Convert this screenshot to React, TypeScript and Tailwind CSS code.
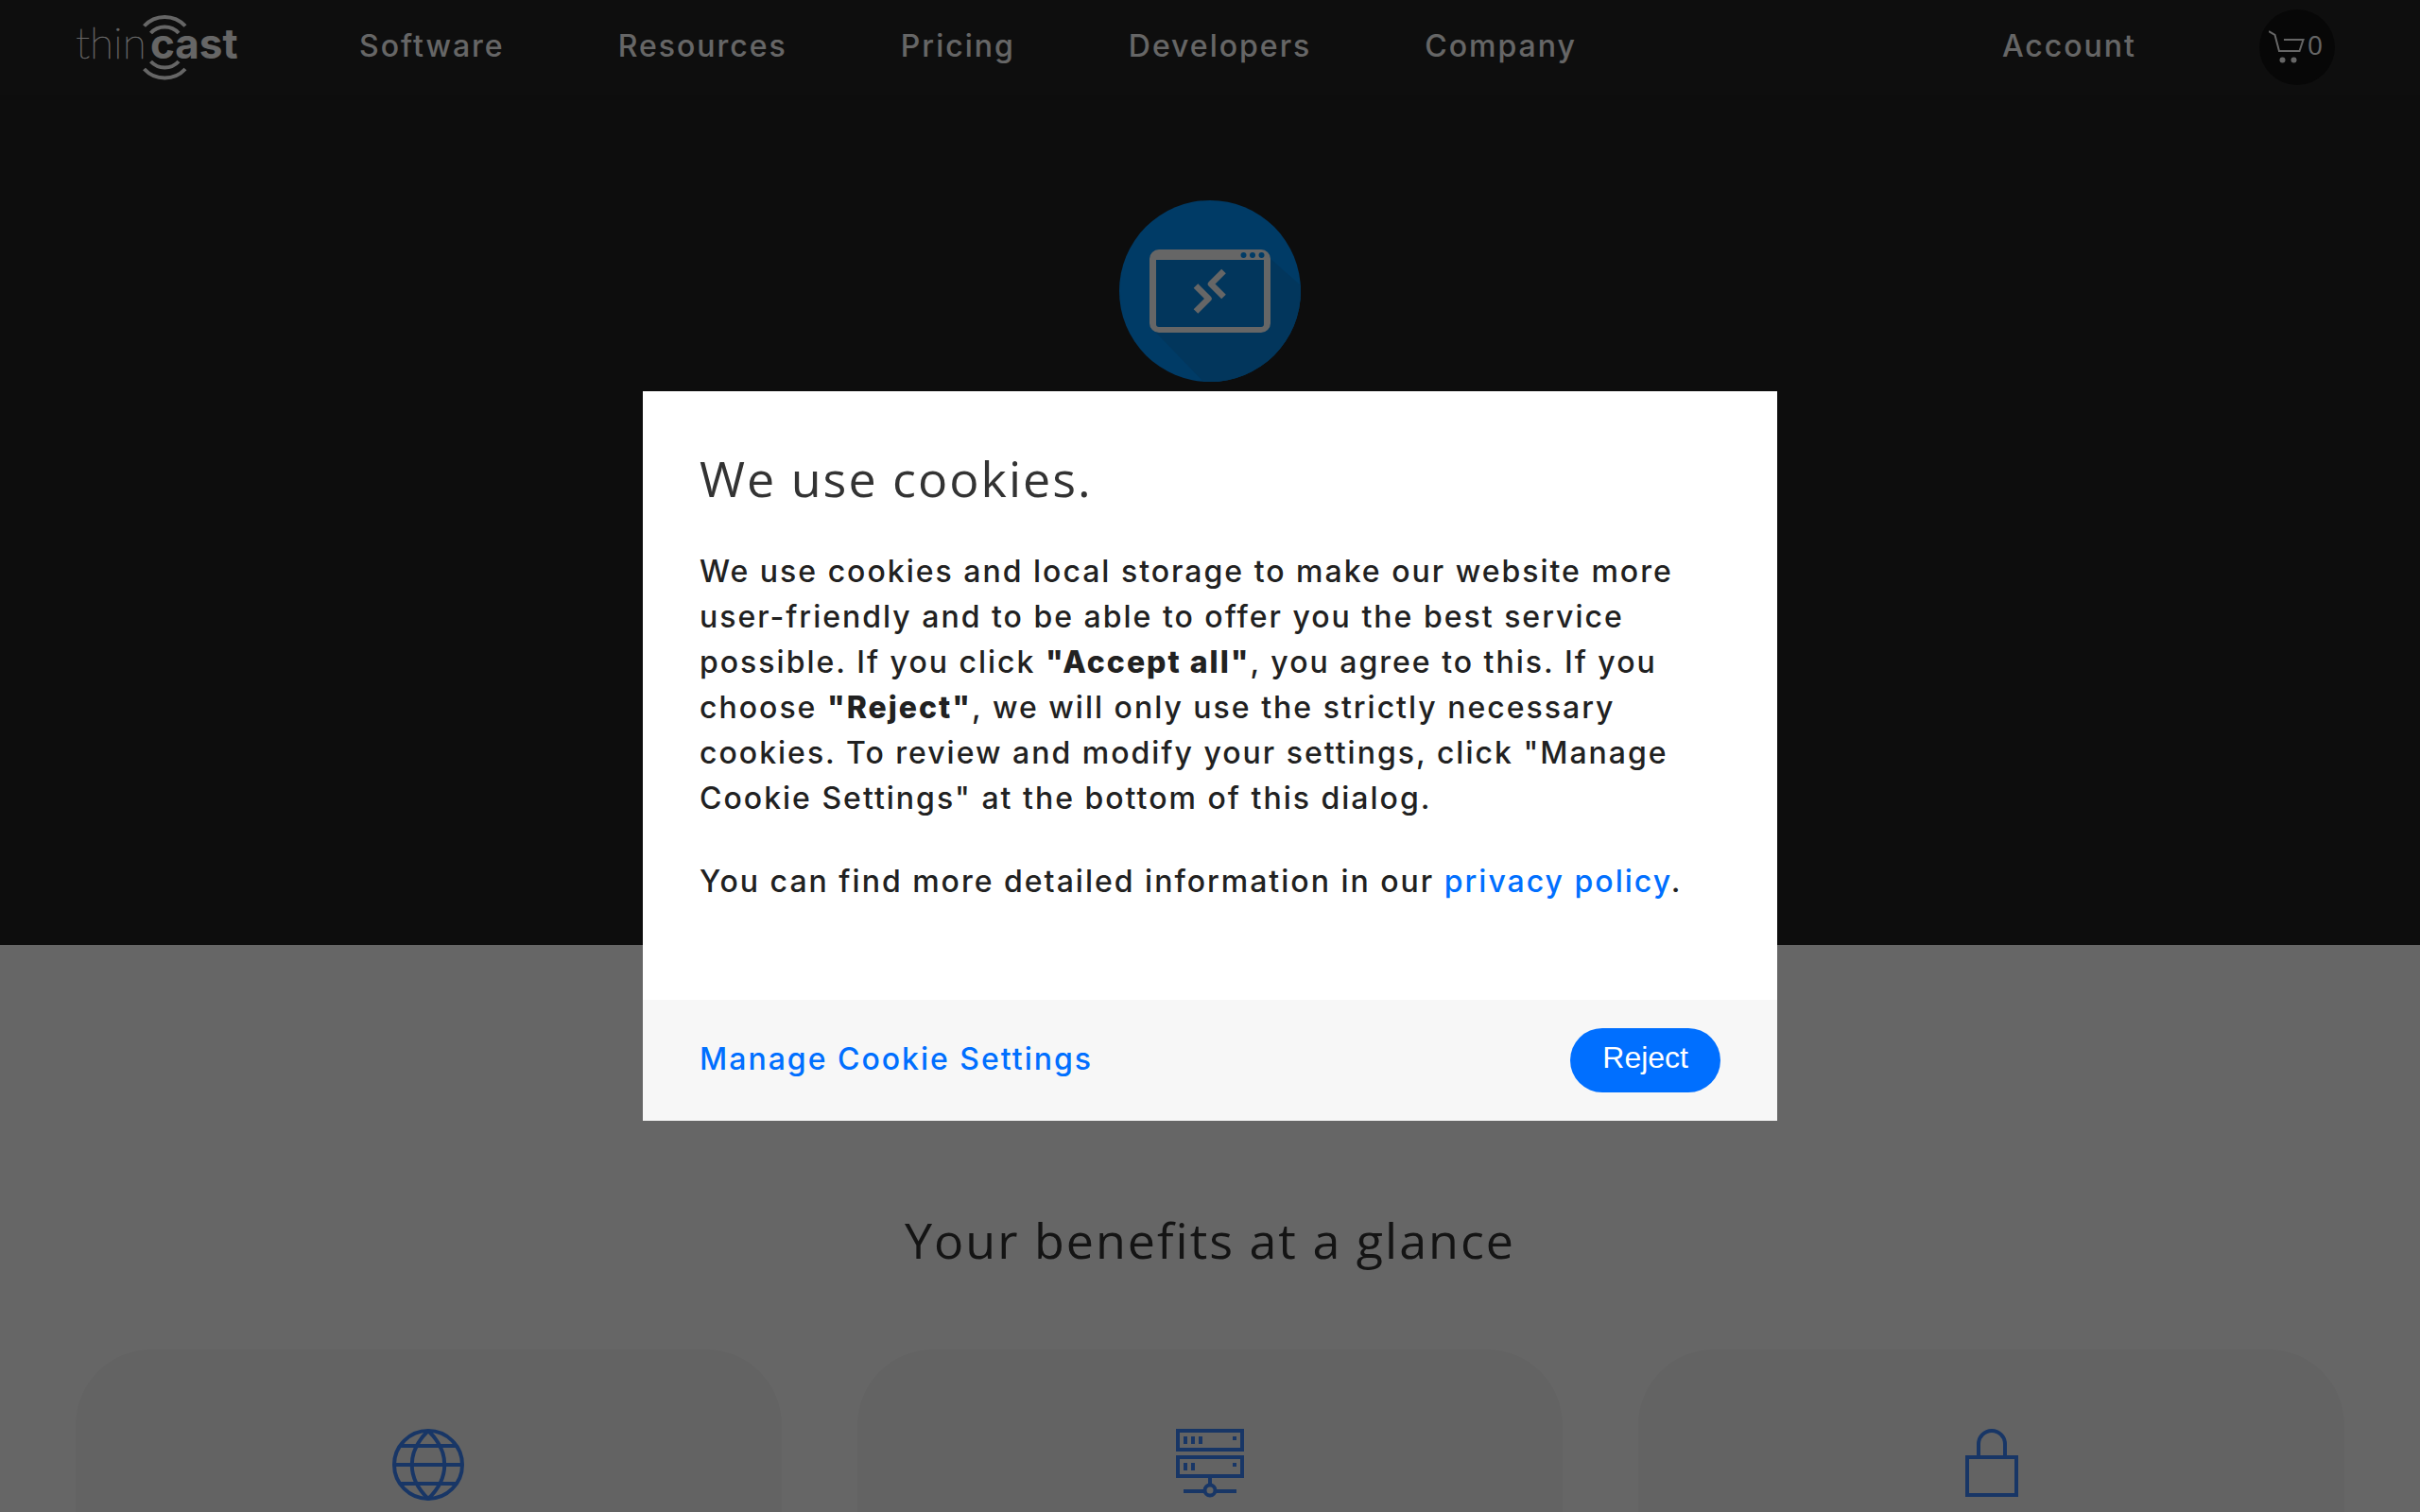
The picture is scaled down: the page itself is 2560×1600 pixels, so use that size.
import type { ReactNode } from "react";

const navLinks = ["Software", "Resources", "Pricing", "Developers", "Company"];

function Logo() {
  return (
    <svg className="w-[176px] h-[74px]" viewBox="80 14 176 74" fill="none" role="img" aria-label="thincast">
      <text
        x="80"
        y="63"
        fill="#fff"
        fontFamily="Lato, Inter, sans-serif"
        fontWeight="100"
        fontSize="46"
        stroke="#fff"
        strokeWidth="0.5"
        letterSpacing="0"
      >
        thin
      </text>
      <text
        x="159"
        y="63"
        fill="#fff"
        fontFamily="Inter, sans-serif"
        fontWeight="700"
        fontSize="44"
        letterSpacing="0"
      >
        cast
      </text>
      <g stroke="#fff" strokeWidth="4">
        <path d="M152.500 28.500A29.500 29.500 0 0 1 196 28.500" />
        <path d="M159.500 36A20 20 0 0 1 189 36" />
        <path d="M159.500 66A20 20 0 0 0 189 66" />
        <path d="M152.500 74A29.500 29.500 0 0 0 196 74" />
      </g>
    </svg>
  );
}

function CartIcon() {
  return (
    <svg className="w-[38px] h-[36px]" viewBox="0 0 38 36" fill="none" stroke="#fff" strokeWidth="2">
      <path d="M0 1L6.500 5L11 22H32.500L36.500 10H16" />
      <circle cx="14.500" cy="31.500" r="3" fill="#fff" stroke="none" />
      <circle cx="26.500" cy="31.500" r="3" fill="#fff" stroke="none" />
    </svg>
  );
}

function ClientIcon() {
  return (
    <svg className="w-48 h-48" viewBox="0 0 192 192" fill="none">
      <clipPath id="disc">
        <circle cx="96" cy="96" r="96" />
      </clipPath>
      <circle cx="96" cy="96" r="96" fill="#0093ff" />
      <path d="M36 137V60H158L200 97V192H89Z" fill="#0588e6" clipPath="url(#disc)" />
      <path
        fillRule="evenodd"
        fill="#fff"
        d="M42 52H150A10 10 0 0 1 160 62V130A10 10 0 0 1 150 140H42A10 10 0 0 1 32 130V62A10 10 0 0 1 42 52ZM39 63V131A3 3 0 0 0 42 134H150A3 3 0 0 0 153 131V63Z"
      />
      <circle cx="131.500" cy="58" r="3" fill="#0093ff" />
      <circle cx="141" cy="58" r="3" fill="#0093ff" />
      <circle cx="150.500" cy="58" r="3" fill="#0093ff" />
      <g stroke="#fff" strokeWidth="6.500" strokeLinejoin="round">
        <path d="M81 90.500L94.500 104L81 117.500" />
        <path d="M110.500 75L97 88.500L110.500 102" />
      </g>
    </svg>
  );
}

function GlobeIcon() {
  return (
    <svg className="w-20 h-20" viewBox="0 0 80 80" fill="none" stroke="#3c87ff" strokeWidth="4">
      <circle cx="40" cy="38" r="36" />
      <path d="M40 2C17 24 17 52 40 74M40 2C63 24 63 52 40 74M4 38H76M10 18H70M10 58H70" />
    </svg>
  );
}

function ServerIcon() {
  return (
    <svg className="w-20 h-20" viewBox="0 0 80 80" fill="none" stroke="#3c87ff" strokeWidth="4">
      <path d="M6 2H74V22H6ZM6 30H74V50H6ZM40 50V58M12 66H34M46 66H68" />
      <path d="M14 8V16M22 8V16M30 8V16M14 36V44M22 36V44M66 8V12M66 36V40" />
      <circle cx="40" cy="65" r="5.500" />
    </svg>
  );
}

function LockIcon() {
  return (
    <svg className="w-20 h-20" viewBox="0 0 80 80" fill="none" stroke="#3c87ff" strokeWidth="4">
      <path d="M14 30H66V70H14ZM26 30V16A14 14 0 0 1 54 16V30" />
    </svg>
  );
}

function BenefitCard({ children }: { children: ReactNode }) {
  return (
    <div className="h-[480px] rounded-[80px] bg-[#f7f7f7] pt-[84px] flex justify-center items-start">
      {children}
    </div>
  );
}

export default function App() {
  return (
    <div className="h-screen overflow-hidden bg-white font-[Inter,sans-serif] font-medium text-[32px] leading-[48px] tracking-[2px] text-[#212121]">
      <header className="h-[100px] bg-[#242424] pl-20 pr-[90px] flex items-center text-white">
        <a href="#home">
          <Logo />
        </a>
        <nav className="ml-[124px] pb-0.5 flex gap-[120px]">
          {navLinks.map((label) => (
            <a key={label} href={`#${label.toLowerCase()}`}>
              {label}
            </a>
          ))}
        </nav>
        <a href="#account" className="ml-auto pb-0.5">
          Account
        </a>
        <a
          href="#cart"
          aria-label="Cart"
          className="ml-[130px] w-20 h-20 rounded-full bg-[#121212] flex items-center pl-[10px] gap-[3px] font-[Open_Sans,sans-serif] text-[28px] tracking-normal"
        >
          <CartIcon />
          <span className="pb-1.5">0</span>
        </a>
      </header>

      <section className="h-[900px] bg-[#222222] pt-28 flex justify-center items-start">
        <ClientIcon />
      </section>

      <section className="pt-[278px] px-20">
        <h2 className="text-center font-[Open_Sans,sans-serif] font-normal text-[52px] leading-[68px] text-[#333333]">
          Your benefits at a glance
        </h2>
        <div className="mt-[82px] grid grid-cols-3 gap-20">
          <BenefitCard>
            <GlobeIcon />
          </BenefitCard>
          <BenefitCard>
            <ServerIcon />
          </BenefitCard>
          <BenefitCard>
            <LockIcon />
          </BenefitCard>
        </div>
      </section>

      {/* Cookie consent */}
      <div className="fixed inset-0 bg-black/60 flex items-center justify-center">
        <div role="dialog" aria-labelledby="cookie-title" className="w-full max-w-[1200px] bg-white">
          <div className="px-15 pt-[59px] pb-[101px]">
            <h1
              id="cookie-title"
              className="mb-[42px] font-[Open_Sans,sans-serif] font-normal text-[52px] leading-[66px] text-[#333333]"
            >
              We use cookies.
            </h1>
            <p className="mb-10">
              We use cookies and local storage to make our website more user-friendly and to be able to offer you the
              best service possible. If you click <strong className="font-extrabold">"Accept all"</strong>, you agree
              to this. If you choose <strong className="font-extrabold">"Reject"</strong>, we will only use the
              strictly necessary cookies. To review and modify your settings, click "Manage Cookie Settings" at the
              bottom of this dialog.
            </p>
            <p>
              You can find more detailed information in our{" "}
              <a href="#privacy" className="text-[#006fff]">
                privacy policy
              </a>
              .
            </p>
          </div>
          <div className="h-32 px-15 bg-[#f7f7f7] flex items-center justify-between">
            <a href="#settings" className="pb-0.5 text-[#006fff]">
              Manage Cookie Settings
            </a>
            <button
              type="button"
              className="h-[68px] px-[34px] pb-1.5 rounded-full bg-[#006fff] text-white font-[Liberation_Sans,sans-serif] font-normal tracking-normal"
            >
              Reject
            </button>
          </div>
        </div>
      </div>
    </div>
  );
}
